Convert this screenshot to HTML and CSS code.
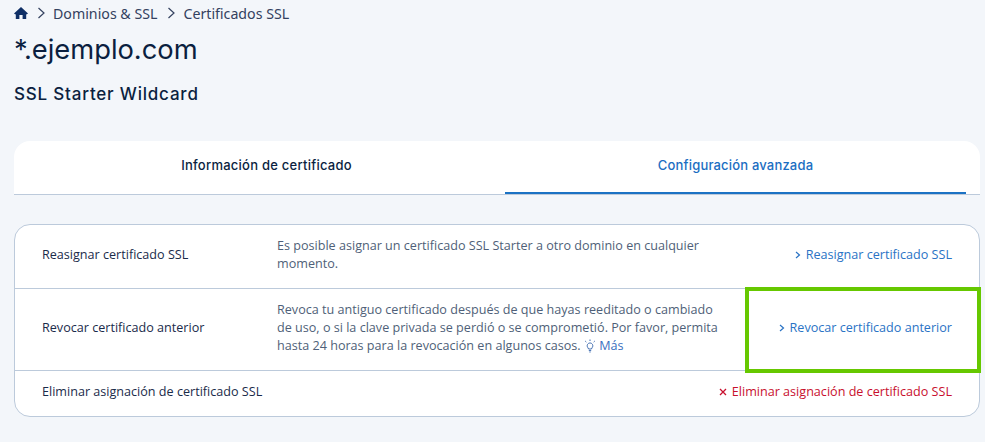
FILE: index.html
```html
<!DOCTYPE html>
<html lang="es">
<head>
<meta charset="utf-8">
<title>*.ejemplo.com</title>
<link rel="stylesheet" href="styles.css">
</head>
<body>
<nav class="crumbs">
  <svg class="home" viewBox="0 0 14 12" width="14" height="12"><path d="M7 0 L14 6.4 L12.6 7.4 L12.2 7 V12 H8.6 V8 H5.4 V12 H1.8 V7 L1.4 7.4 L0 6.4 Z"/></svg>
  <svg class="sep" viewBox="0 0 8 12" width="8" height="12"><path d="M1.5 1 L7 6 L1.5 11"/></svg>
  <span>Dominios &amp; SSL</span>
  <svg class="sep" viewBox="0 0 8 12" width="8" height="12"><path d="M1.5 1 L7 6 L1.5 11"/></svg>
  <span>Certificados SSL</span>
</nav>
<h1 class="title">*.ejemplo.com</h1>
<h2 class="subtitle">SSL Starter Wildcard</h2>
<div class="tabs">
  <div class="tab">Información de certificado</div>
  <div class="tab active">Configuración avanzada</div>
</div>
<div class="table">
  <div class="row row-a">
    <div class="name">Reasignar certificado SSL</div>
    <div class="desc">Es posible asignar un certificado SSL Starter a otro dominio en cualquier momento.</div>
    <a class="action"><svg class="chev" viewBox="0 0 6 8" width="6" height="8"><path d="M1 1 L4.5 4 L1 7"/></svg>Reasignar certificado SSL</a>
  </div>
  <div class="row row-b">
    <div class="name">Revocar certificado anterior</div>
    <div class="desc">Revoca tu antiguo certificado después de que hayas reeditado o cambiado de uso, o si la clave privada se perdió o se comprometió. Por favor, permita hasta 24 horas para la revocación en algunos casos. <svg class="bulb" viewBox="0 0 12 14" width="12" height="14"><path d="M3.8 8.6 C2.4 6.6 3.6 4 6 4 C8.4 4 9.6 6.6 8.2 8.6 L7.4 10 H4.6 Z M4.8 11.6 H7.2 M5.4 13 H6.6 M6 0.5 V2 M1.2 2 L2.3 3.1 M10.8 2 L9.7 3.1"/></svg> <a class="more">Más</a></div>
    <a class="action"><svg class="chev" viewBox="0 0 6 8" width="6" height="8"><path d="M1 1 L4.5 4 L1 7"/></svg>Revocar certificado anterior</a>
    <div class="highlight"></div>
  </div>
  <div class="row row-c">
    <div class="name">Eliminar asignación de certificado SSL</div>
    <a class="action danger"><svg class="cross" viewBox="0 0 8 8" width="8" height="8"><path d="M1 1 L7 7 M7 1 L1 7"/></svg>Eliminar asignación de certificado SSL</a>
  </div>
</div>
</body>
</html>
```

FILE: styles.css
```css
* { box-sizing: border-box; }
html, body { margin: 0; padding: 0; }
body {
  width: 985px;
  height: 442px;
  overflow: hidden;
  background: #f3f6fa;
  padding: 0 5px 0 14px;
  font-family: "Open Sans", "Noto Sans", sans-serif;
  color: #0b1f3f;
}
.crumbs {
  display: flex;
  align-items: center;
  height: 14px;
  margin-top: 6px;
  font-family: "Noto Sans", sans-serif;
  font-size: 14.2px;
  color: #33415f;
}
.home { fill: #0f2f66; margin-right: 9px; flex: none; }
.sep { fill: none; stroke: #33415f; stroke-width: 1.2; margin-right: 8px; flex: none; }
.crumbs span { margin-right: 10px; }
.title {
  margin: 12px 0 0;
  font-family: Inter, sans-serif;
  font-weight: 400;
  font-size: 27.3px;
  line-height: 36px;
  color: #0b1f3f;
}
.subtitle {
  margin: 15px 0 0;
  font-family: Inter, sans-serif;
  font-weight: 500;
  font-size: 17px;
  letter-spacing: 0.8px;
  line-height: 22px;
  color: #0b1f3f;
}
.tabs {
  display: grid;
  grid-template-columns: 477px 461px;
  height: 54px;
  margin-top: 36px;
  padding-left: 14px;
  background: #fff;
  border-radius: 16px 16px 0 0;
  border-bottom: 1px solid #bccadb;
}
.tab {
  display: flex;
  align-items: center;
  justify-content: center;
  padding-bottom: 6px;
  font-family: Inter, sans-serif;
  font-weight: 500;
  font-size: 13px;
  letter-spacing: 0.25px;
  color: #0b1f3f;
}
.tab.active {
  color: #1b6ec2;
  letter-spacing: 0.18px;
  border-bottom: 2px solid #1b72c4;
  padding-bottom: 4px;
}
.table {
  margin-top: 29px;
  height: 193px;
  background: #fff;
  border: 1px solid #bccadb;
  border-radius: 16px;
  font-size: 12.6px;
}
.row {
  position: relative;
  display: grid;
  grid-template-columns: 235px 1fr auto;
  align-items: center;
  padding: 0 27px 4px;
  border-bottom: 1px solid #bccadb;
}
.row-a { height: 64px; }
.row-b { height: 82px; }
.row-c { height: 45px; border-bottom: 0; grid-template-columns: 1fr auto; }
.name { color: #1a2b4a; }
.desc { color: #4f5f78; line-height: 18px; width: 446px; }
.action {
  display: flex;
  align-items: center;
  gap: 5px;
  color: #2a73c5;
  white-space: nowrap;
}
.chev { fill: none; stroke: #2a73c5; stroke-width: 1.2; }
.more { color: #3a6fc0; }
.bulb { fill: none; stroke: #3f6db0; stroke-width: 1; vertical-align: -3px; }
.danger { color: #c8102e; }
.cross { fill: none; stroke: #c8102e; stroke-width: 1.3; }
.highlight {
  position: absolute;
  left: 730px;
  top: -2px;
  width: 236px;
  height: 86px;
  border: 4px solid #66c800;
}
```
